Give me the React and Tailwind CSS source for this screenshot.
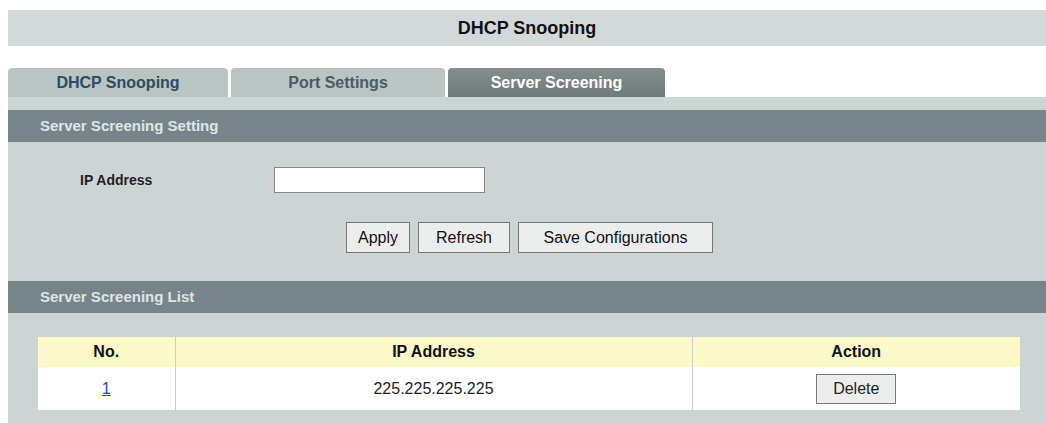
export default function App() {
  const font = { fontFamily: '"Liberation Sans", Arial, sans-serif' };
  const buttons = [
    ["Apply", "w-[64px]"],
    ["Refresh", "w-[92px]"],
    ["Save Configurations", "w-[195px]"],
  ];
  return (
    <div style={font} className="w-[1046px] h-[423px] bg-white overflow-hidden pl-2 pt-[10px]">
      <div className="h-9 bg-[#d3d9d9] flex items-center justify-center text-[18px] font-bold text-[#111]">
        DHCP Snooping
      </div>
      <div className="flex mt-[22px] h-[29px] gap-[3px]">
        <div className="w-[220px] bg-[#b9c4c3] rounded-t-sm flex items-center justify-center font-bold text-[16px] text-[#2d4a66]">DHCP Snooping</div>
        <div className="w-[214px] bg-[#b9c4c3] rounded-t-sm flex items-center justify-center font-bold text-[16px] text-[#4a5b66]">Port Settings</div>
        <div className="w-[217px] bg-gradient-to-b from-[#838e8d] to-[#6f7b7a] rounded-t-sm flex items-center justify-center font-bold text-[16px] text-white">Server Screening</div>
      </div>
      <div className="bg-[#cdd4d4] h-[13px]" />
      <div className="bg-[#77858a] h-8 flex items-center pl-8 font-bold text-[15px] text-[#dfe5e5]">Server Screening Setting</div>
      <div className="bg-[#cdd4d4] h-[139px]">
        <div className="flex items-center pt-[25px]">
          <div className="w-[266px] pl-[72px] font-bold text-[14px] text-[#222]">IP Address</div>
          <input className="w-[211px] h-[26px] bg-white border border-[#888] outline-none" />
        </div>
        <div className="flex gap-[8px] mt-[29px] pl-[338px]">
          {buttons.map(([b, w]) => (
            <button key={b} className={`h-[31px] ${w} bg-[#eceeee] border border-[#777] text-[16px] text-[#111]`}>{b}</button>
          ))}
        </div>
      </div>
      <div className="bg-[#77858a] h-8 flex items-center pl-8 font-bold text-[15px] text-[#dfe5e5]">Server Screening List</div>
      <div className="bg-[#cdd4d4] h-[110px] pt-[24px] pl-[30px]">
        <table className="w-[982px] border-collapse text-[16px]">
          <thead>
            <tr className="bg-[#fbf9c8] h-[30px] font-bold text-[#111]">
              <th className="w-[137px] border-r border-[#ccc]">No.</th>
              <th className="w-[517px] border-r border-[#ccc]">IP Address</th>
              <th>Action</th>
            </tr>
          </thead>
          <tbody>
            <tr className="bg-white h-[43px] text-center text-[#222]">
              <td className="border-r border-[#ccc]"><span className="text-[#1a4aa8] underline">1</span></td>
              <td className="border-r border-[#ccc]">225.225.225.225</td>
              <td><button className="h-[30px] w-[80px] bg-[#eceeee] border border-[#777]">Delete</button></td>
            </tr>
          </tbody>
        </table>
      </div>
    </div>
  );
}
